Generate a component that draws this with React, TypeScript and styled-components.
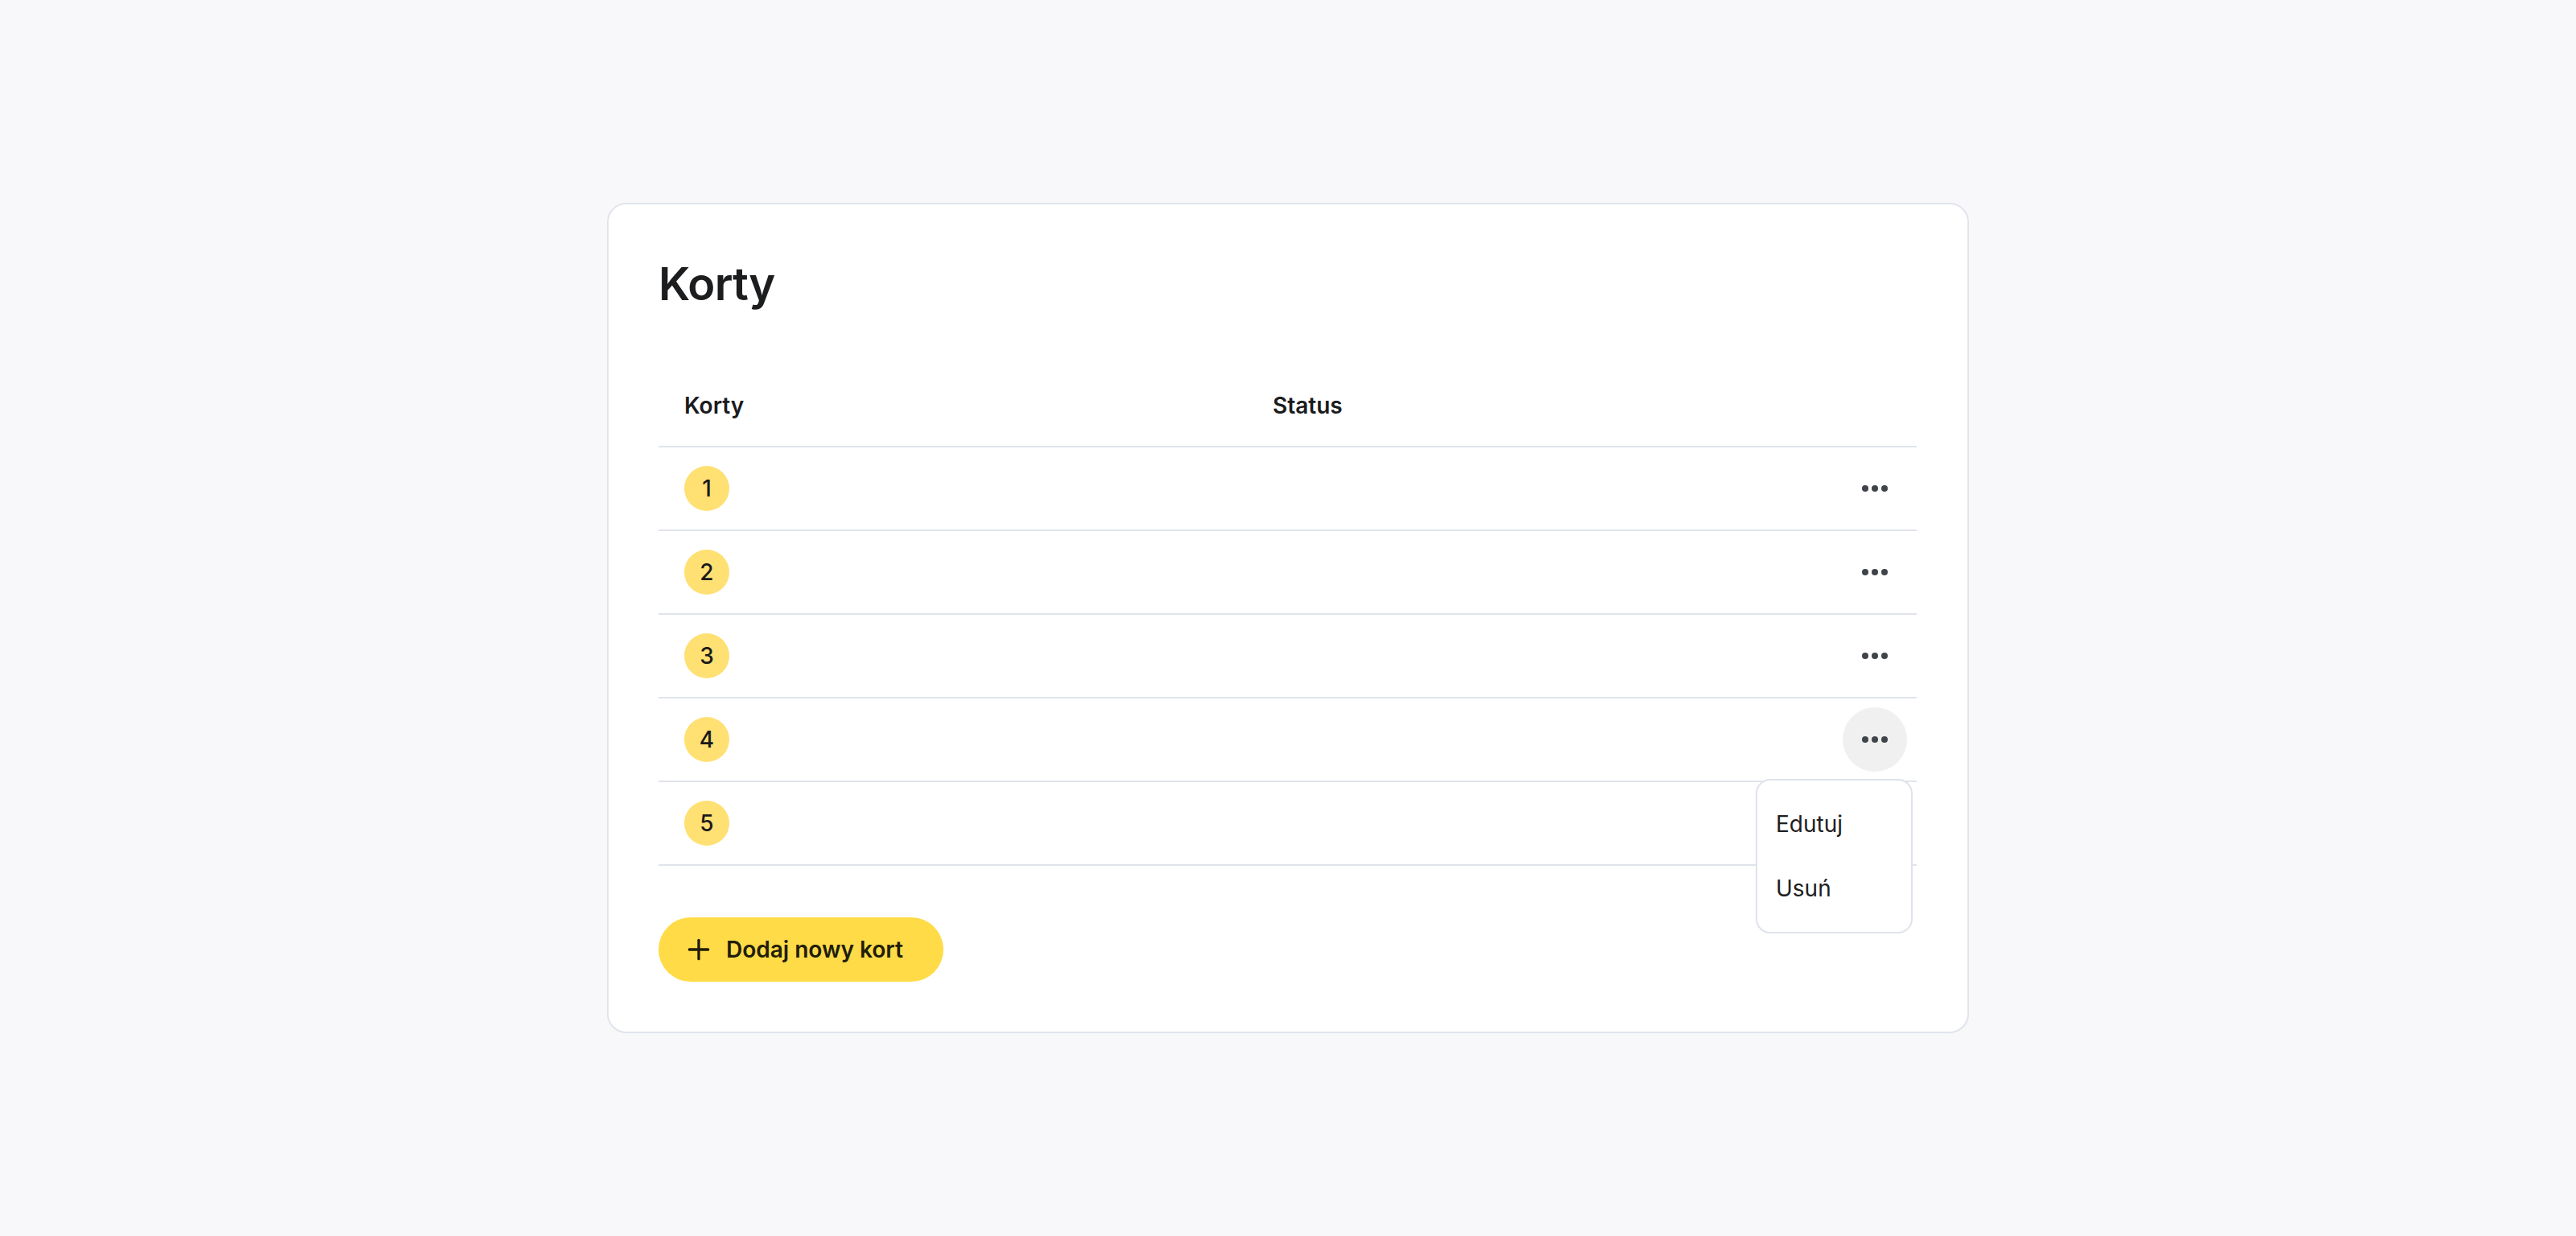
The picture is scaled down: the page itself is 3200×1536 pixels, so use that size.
import React from "react";
import styled, { createGlobalStyle } from "styled-components";
import { Plus } from "lucide-react";

const GlobalStyle = createGlobalStyle`
  html, body {
    margin: 0;
    padding: 0;
    background: #f8f8fa;
    font-family: Inter, "Noto Sans", "Liberation Sans", sans-serif;
    color: #1c1d1f;
  }
  * { box-sizing: border-box; }
`;

const Page = styled.div`
  min-height: 100vh;
  display: flex;
  align-items: center;
  justify-content: center;
`;

const Card = styled.section`
  width: 1692px;
  background: #ffffff;
  border: 2px solid #e0e4eb;
  border-radius: 24px;
  padding: 62px 63px 62px 62px;
  display: flex;
  flex-direction: column;
  align-items: flex-start;
`;

const Title = styled.h1`
  margin: 0 0 64px;
  font-size: 56px;
  line-height: 74px;
  font-weight: 600;
  color: #1c1d1f;
  letter-spacing: -0.8px;
`;

const Table = styled.div`
  width: 100%;
  display: flex;
  flex-direction: column;
`;

const RowBase = styled.div`
  display: grid;
  grid-template-columns: 731px 1fr auto;
  align-items: center;
  border-bottom: 2px solid #e0e4eb;
`;

const HeaderRow = styled(RowBase)``;

const HeaderCell = styled.div`
  padding: 30px 32px;
  font-size: 28px;
  line-height: 40px;
  font-weight: 600;
  color: #1a1b1d;
`;

const Row = styled(RowBase)`
  height: 104px;
`;

const Cell = styled.div<{ $end?: boolean }>`
  padding: 0 ${(p) => (p.$end ? "12px" : "32px")} 0 ${(p) => (p.$end ? "0" : "32px")};
  display: flex;
  align-items: center;
  justify-content: ${(p) => (p.$end ? "flex-end" : "flex-start")};
`;

const Badge = styled.span`
  width: 56px;
  height: 56px;
  border-radius: 50%;
  background: #ffe072;
  display: inline-flex;
  align-items: center;
  justify-content: center;
  font-size: 28px;
  font-weight: 500;
  color: #1a1a1a;
`;

const MoreWrap = styled.div`
  position: relative;
`;

const MoreButton = styled.button<{ $active?: boolean }>`
  width: 80px;
  height: 80px;
  border-radius: 50%;
  border: none;
  padding: 0;
  margin: 0;
  background: ${(p) => (p.$active ? "#f0f0f0" : "transparent")};
  display: flex;
  align-items: center;
  justify-content: center;
  cursor: pointer;
`;

const Menu = styled.div`
  position: absolute;
  top: calc(100% + 9px);
  right: -7px;
  width: 195px;
  background: #ffffff;
  border: 2px solid #dfe3ea;
  border-radius: 18px;
  padding: 14px 0;
  z-index: 10;
  display: flex;
  flex-direction: column;
`;

const MenuItem = styled.div`
  padding: 20px 23px;
  font-size: 28px;
  line-height: 40px;
  font-weight: 400;
  color: #1f2022;
`;

const AddButton = styled.button`
  margin-top: 64px;
  height: 80px;
  border: none;
  border-radius: 40px;
  background: #ffdb48;
  padding: 0 50px 0 30px;
  display: inline-flex;
  align-items: center;
  gap: 14px;
  font-family: Inter, "Noto Sans", "Liberation Sans", sans-serif;
  font-size: 28px;
  line-height: 40px;
  font-weight: 600;
  color: #211d0a;
  cursor: pointer;
`;

const Dots = () => (
  <svg width="32" height="8" viewBox="0 0 32 8" aria-hidden="true">
    <circle cx="4" cy="4" r="4" fill="#3f434a" />
    <circle cx="16" cy="4" r="4" fill="#3f434a" />
    <circle cx="28" cy="4" r="4" fill="#3f434a" />
  </svg>
);

const courts = [1, 2, 3, 4, 5];
const openIndex = 4;

export default function App() {
  return (
    <>
      <GlobalStyle />
      <Page>
        <Card>
          <Title>Korty</Title>
          <Table>
            <HeaderRow>
              <HeaderCell>Korty</HeaderCell>
              <HeaderCell>Status</HeaderCell>
              <HeaderCell />
            </HeaderRow>
            {courts.map((n) => (
              <Row key={n}>
                <Cell>
                  <Badge>{n}</Badge>
                </Cell>
                <Cell />
                <Cell $end>
                  <MoreWrap>
                    <MoreButton $active={n === openIndex} aria-label="Więcej">
                      <Dots />
                    </MoreButton>
                    {n === openIndex && (
                      <Menu>
                        <MenuItem>Edutuj</MenuItem>
                        <MenuItem>Usuń</MenuItem>
                      </Menu>
                    )}
                  </MoreWrap>
                </Cell>
              </Row>
            ))}
          </Table>
          <AddButton>
            <Plus size={40} strokeWidth={2} />
            Dodaj nowy kort
          </AddButton>
        </Card>
      </Page>
    </>
  );
}
